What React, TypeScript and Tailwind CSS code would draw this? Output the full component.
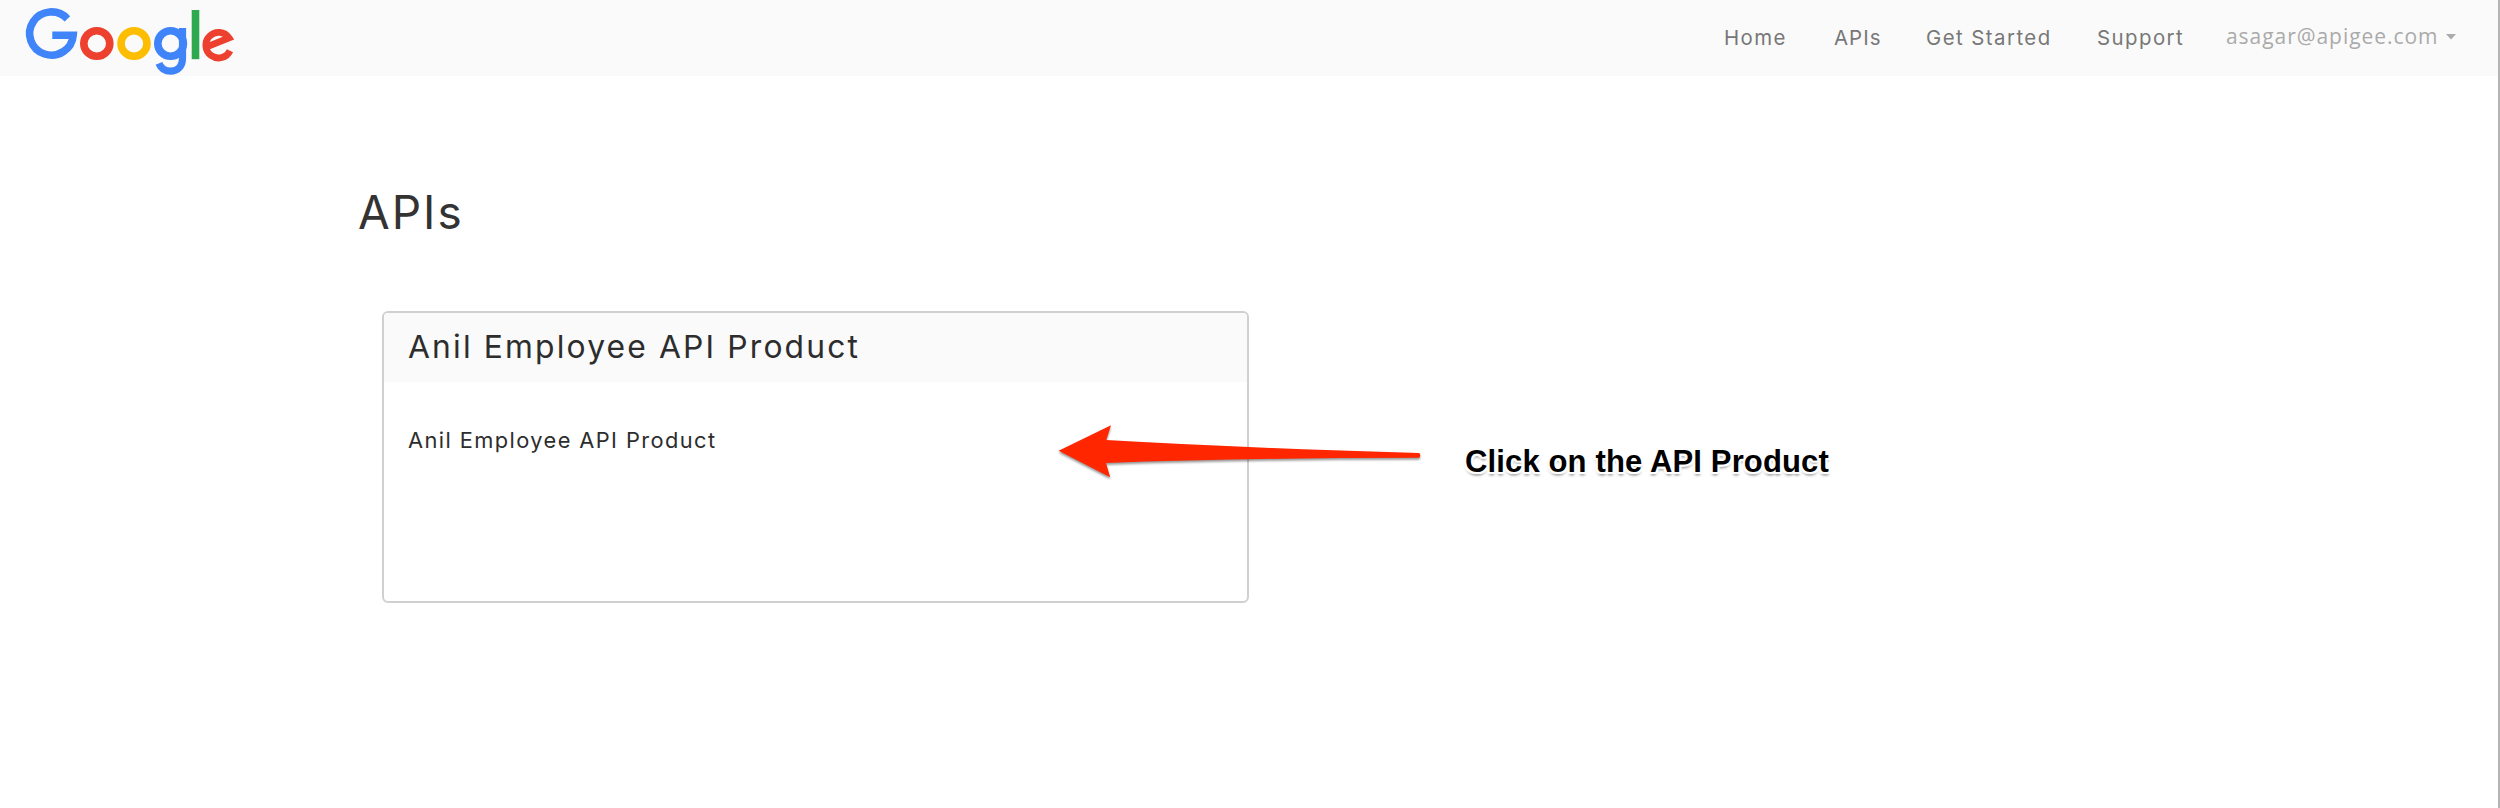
function GoogleLogo() {
  return (
    <svg width="234" height="76" viewBox="0 0 234 76" fill="none" strokeWidth="7.6" role="img" aria-label="Google" className="block overflow-visible">
      <path d="M67.4 18.8A21.8 21.6 0 1 0 73.2 35.2H52.3" stroke="#4084fa" />
      <ellipse cx="96.8" cy="43.5" rx="13" ry="12.8" stroke="#ee402f" />
      <ellipse cx="134" cy="43.5" rx="13" ry="12.8" stroke="#fdbd00" />
      <ellipse cx="170.6" cy="43.5" rx="12.8" ry="12.8" stroke="#4084fa" />
      <path d="M182.5 28V58.5C182.5 66.5 177.5 71.2 170.6 71.2C165 71.2 161 68.3 158.9 63.3" stroke="#4084fa" strokeWidth="7.2" />
      <rect x="191.7" y="10" width="7.6" height="49.2" fill="#2fa950" />
      <path d="M230 50.7A12.7 12.8 0 1 1 229 37.9L208 46.4" stroke="#ee402f" strokeWidth="6.8" />
    </svg>
  );
}

function ProductCard() {
  return (
    <section className="ml-[23px] mt-[59px] h-[292px] w-[867px] overflow-hidden rounded-[6px] border-2 border-[#d0d0d0] bg-white text-[#2d2d2d]">
      <h2 className="h-[69px] bg-[#fafafa] pl-[24px] text-[31.8px] leading-[67px] font-[370] tracking-[2.15px]">Anil Employee API Product</h2>
      <p className="mt-[38px] pl-[24px] text-[21.8px] leading-[41px] font-[370] tracking-[1.42px]">Anil Employee API Product</p>
    </section>
  );
}

function Callout() {
  return (
    <div className="pointer-events-none absolute left-[1050px] top-[415px] flex">
      <svg width="415" height="80" viewBox="1050 415 415 80" aria-hidden="true" className="drop-shadow-[0_2px_1px_rgba(0,0,0,0.4)]">
        <path
          d="M1058.6 450.7L1111 425.3L1106.3 440Q1250 448.3 1418.5 453Q1420.3 453 1420.3 455.3Q1420.3 457.8 1418.5 457.8Q1240 458 1106 463L1110.2 477.3Z"
          fill="#ff2600"
        />
      </svg>
      <span className="pt-[27px] text-[31px] leading-[40px] font-bold tracking-[0.14px] whitespace-nowrap text-black font-['Liberation_Sans',Arial,sans-serif] [text-shadow:0_0_2px_#fff,2px_0_1px_#fff,-2px_0_1px_#fff,0_2px_1px_#fff,0_-2px_1px_#fff,2px_2px_1px_#fff,-2px_2px_1px_#fff,0_3px_3px_rgba(0,0,0,0.6)]">
        Click on the API Product
      </span>
    </div>
  );
}

export default function App() {
  return (
    <div className="relative h-[808px] w-[2500px] overflow-hidden border-r-2 border-[#b4b4b4] bg-white font-['Inter',sans-serif]">
      <header className="flex h-[76px] bg-[#fafafa]">
        <GoogleLogo />
        <nav className="ml-[1490px] flex text-[20.4px] leading-[76px] font-[370] tracking-[1.45px] whitespace-nowrap text-[#777]">
          <a className="w-[110px]">Home</a>
          <a className="w-[92px] tracking-[1.05px]">APIs</a>
          <a className="w-[171px]">Get Started</a>
          <a className="w-[129px]">Support</a>
          <a className="flex w-[240px] text-[21px] leading-[72px] font-normal tracking-[0.95px] text-[#aaa] font-['Open_Sans',sans-serif]">
            <span className="w-[220px]">asagar@apigee.com</span>
            <svg width="10" height="6" viewBox="0 0 10 6" fill="#aaa" aria-hidden="true" className="mt-[34px]">
              <path d="M0 0H10L5 5.5Z" />
            </svg>
          </a>
        </nav>
      </header>
      <main className="pl-[358px] pt-[104px]">
        <h1 className="h-[72px] text-[46px] leading-[65px] font-[370] tracking-[2px] text-[#333]">APIs</h1>
        <div className="pl-px">
          <ProductCard />
        </div>
      </main>
      <Callout />
    </div>
  );
}
